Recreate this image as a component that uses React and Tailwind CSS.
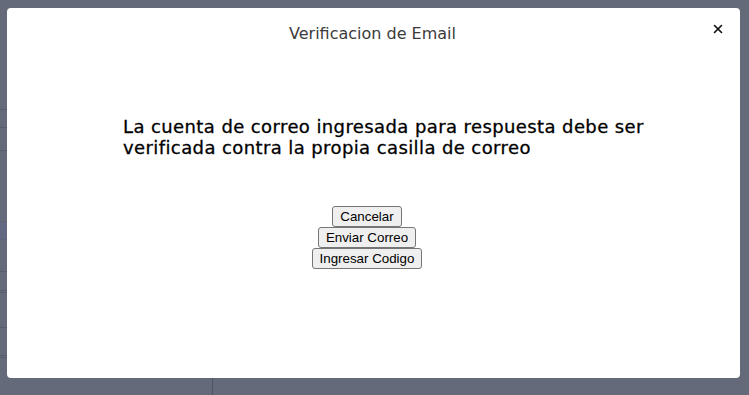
import { X } from 'lucide-react';

const rows = [
  { h: 'h-[109px]', cls: '' },
  { h: 'h-[18px]', cls: 'border-t border-[#585d6c]' },
  { h: 'h-[23px]', cls: 'border-t border-[#585d6c]' },
  { h: 'h-[71px]', cls: 'border-t border-[#585d6c]' },
  { h: 'h-[18px]', cls: 'border-t border-[#5d6378] bg-[#626882]' },
  { h: 'h-[32px]', cls: 'border-t border-[#5d6378]' },
  { h: 'h-[19px]', cls: 'border-t border-[#585d6c]' },
  { h: 'h-[37px]', cls: 'border-t-[3px] border-double border-[#585d6c]' },
  { h: 'h-[28px]', cls: 'border-t border-[#585d6c]' },
  { h: 'h-[40px]', cls: 'border-t-[3px] border-double border-[#585d6c]' },
];

export default function App() {
  return (
    <div className="relative w-[749px] h-[395px] overflow-hidden bg-[#646a7a]">
      {/* page behind the dialog */}
      <div className="flex h-full">
        <div className="w-[212px] flex flex-col">
          {rows.map((r, i) => (
            <div key={i} className={`${r.h} ${r.cls} shrink-0`} />
          ))}
        </div>
        <div className="flex-1 flex flex-col">
          <div className="h-[60px]" />
          <div className="flex-1 border-l border-[#4f5464]" />
        </div>
      </div>

      {/* modal */}
      <div className="absolute left-[7px] top-[8px] w-[733px] h-[370px] bg-white rounded-[4px] flex flex-col">
        <div className="relative h-[52px] flex items-center justify-center pr-[2px]">
          <h2
            className="text-[16px] text-[#3b3b3b]"
            style={{ fontFamily: '"DejaVu Sans", sans-serif' }}
          >
            Verificacion de Email
          </h2>
          <button className="absolute right-[15px] top-[14px] text-[#111]">
            <X size={14} strokeWidth={2.8} />
          </button>
        </div>

        <div className="pl-[116px] pt-[56px]">
          <p
            className="text-[18px] leading-[21px] tracking-[0.4px] text-black [-webkit-text-stroke:0.3px_black]"
            style={{ fontFamily: '"DejaVu Sans", sans-serif' }}
          >
            La cuenta de correo ingresada para respuesta debe ser
            <br />
            verificada contra la propia casilla de correo
          </p>
        </div>

        <div
          className="flex flex-col items-center mt-[48px] pr-[13px]"
          style={{ fontFamily: '"Liberation Sans", Arial, sans-serif' }}
        >
          {['Cancelar', 'Enviar Correo', 'Ingresar Codigo'].map((t) => (
            <button
              key={t}
              className="bg-[#efefef] border border-[#767676] rounded-[3px] px-[7px] py-[2px] text-[13.333px] leading-[normal] text-black"
            >
              {t}
            </button>
          ))}
        </div>
      </div>
    </div>
  );
}
